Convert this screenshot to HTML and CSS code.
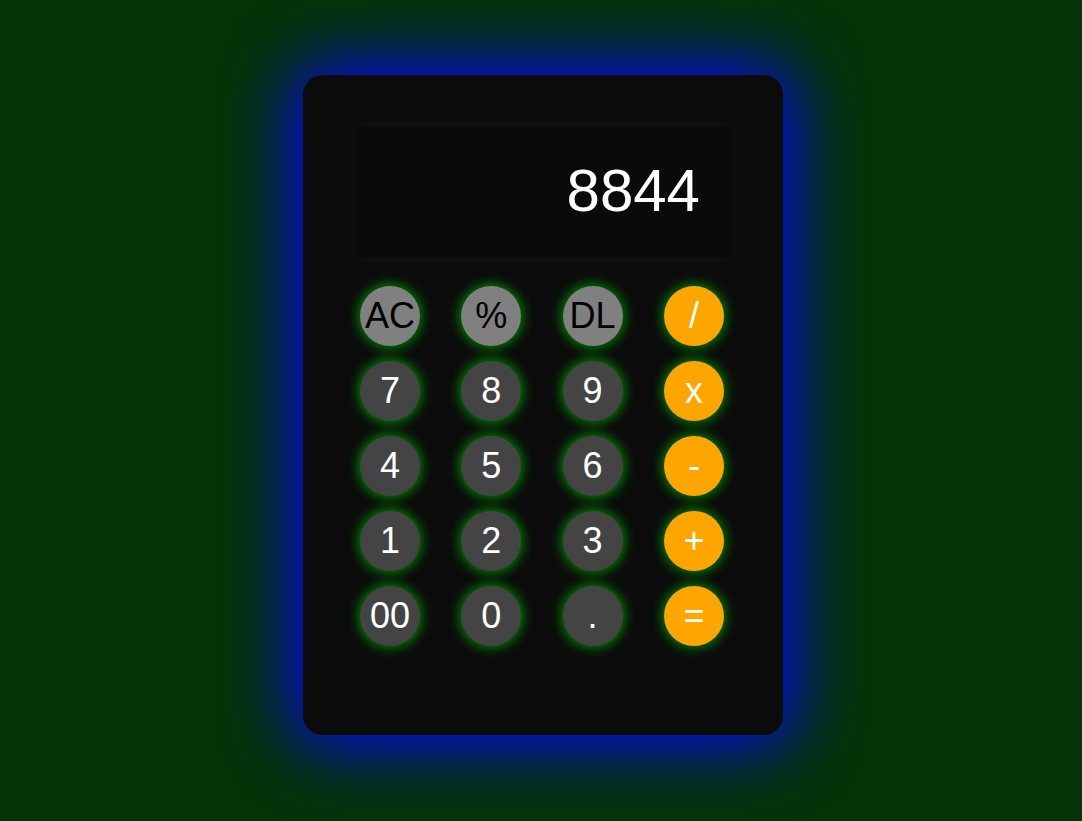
FILE: index.html
```html
<!DOCTYPE html>
<html>
<head>
<meta charset="utf-8">
<link rel="stylesheet" href="styles.css">
</head>
<body>
<div class="page">
  <div class="calc">
    <div class="display"><span class="value">8844</span></div>
    <div class="keys">
      <button class="key fn">AC</button>
      <button class="key fn">%</button>
      <button class="key fn">DL</button>
      <button class="key op">/</button>
      <button class="key num">7</button>
      <button class="key num">8</button>
      <button class="key num">9</button>
      <button class="key op">x</button>
      <button class="key num">4</button>
      <button class="key num">5</button>
      <button class="key num">6</button>
      <button class="key op">-</button>
      <button class="key num">1</button>
      <button class="key num">2</button>
      <button class="key num">3</button>
      <button class="key op">+</button>
      <button class="key num">00</button>
      <button class="key num">0</button>
      <button class="key num">.</button>
      <button class="key op">=</button>
    </div>
  </div>
</div>
</body>
</html>
```

FILE: styles.css
```css
html, body {
  margin: 0;
  padding: 0;
  height: 100%;
}
body {
  background: #073308;
  font-family: "Liberation Sans", Arial, sans-serif;
  overflow: hidden;
}
.page {
  display: flex;
  justify-content: center;
  padding-top: 75px;
  padding-left: 4px;
}
.calc {
  width: 480px;
  height: 660px;
  box-sizing: border-box;
  background: #0b0b0b;
  border-radius: 20px;
  box-shadow: 0 0 70px 8px rgb(0, 0, 255);
  padding-top: 52px;
  display: flex;
  flex-direction: column;
  align-items: flex-start;
}
.display {
  margin-left: 53px;
  width: 376px;
  height: 130px;
  box-sizing: border-box;
  background: #0a0a0a;
  box-shadow: 0 0 14px 2px rgba(255, 255, 255, 0.035);
  display: flex;
  align-items: center;
  justify-content: flex-end;
  padding-right: 32px;
  padding-bottom: 3px;
}
.value {
  color: #ffffff;
  font-size: 60px;
}
.keys {
  margin-top: 29px;
  margin-left: 57px;
  display: grid;
  grid-template-columns: repeat(4, 60px);
  grid-auto-rows: 60px;
  column-gap: 41.3px;
  row-gap: 15px;
}
.key {
  width: 60px;
  height: 60px;
  border: none;
  border-radius: 50%;
  padding: 0;
  font-family: "Liberation Sans", Arial, sans-serif;
  font-size: 36px;
  color: #ffffff;
  background: #444444;
  box-shadow: 0 0 12px 2px #008800;
  display: flex;
  align-items: center;
  justify-content: center;
  white-space: nowrap;
}
.key.fn {
  background: #808080;
  color: #000000;
}
.key.op {
  background: #ffa500;
  color: #ffffff;
}
```
